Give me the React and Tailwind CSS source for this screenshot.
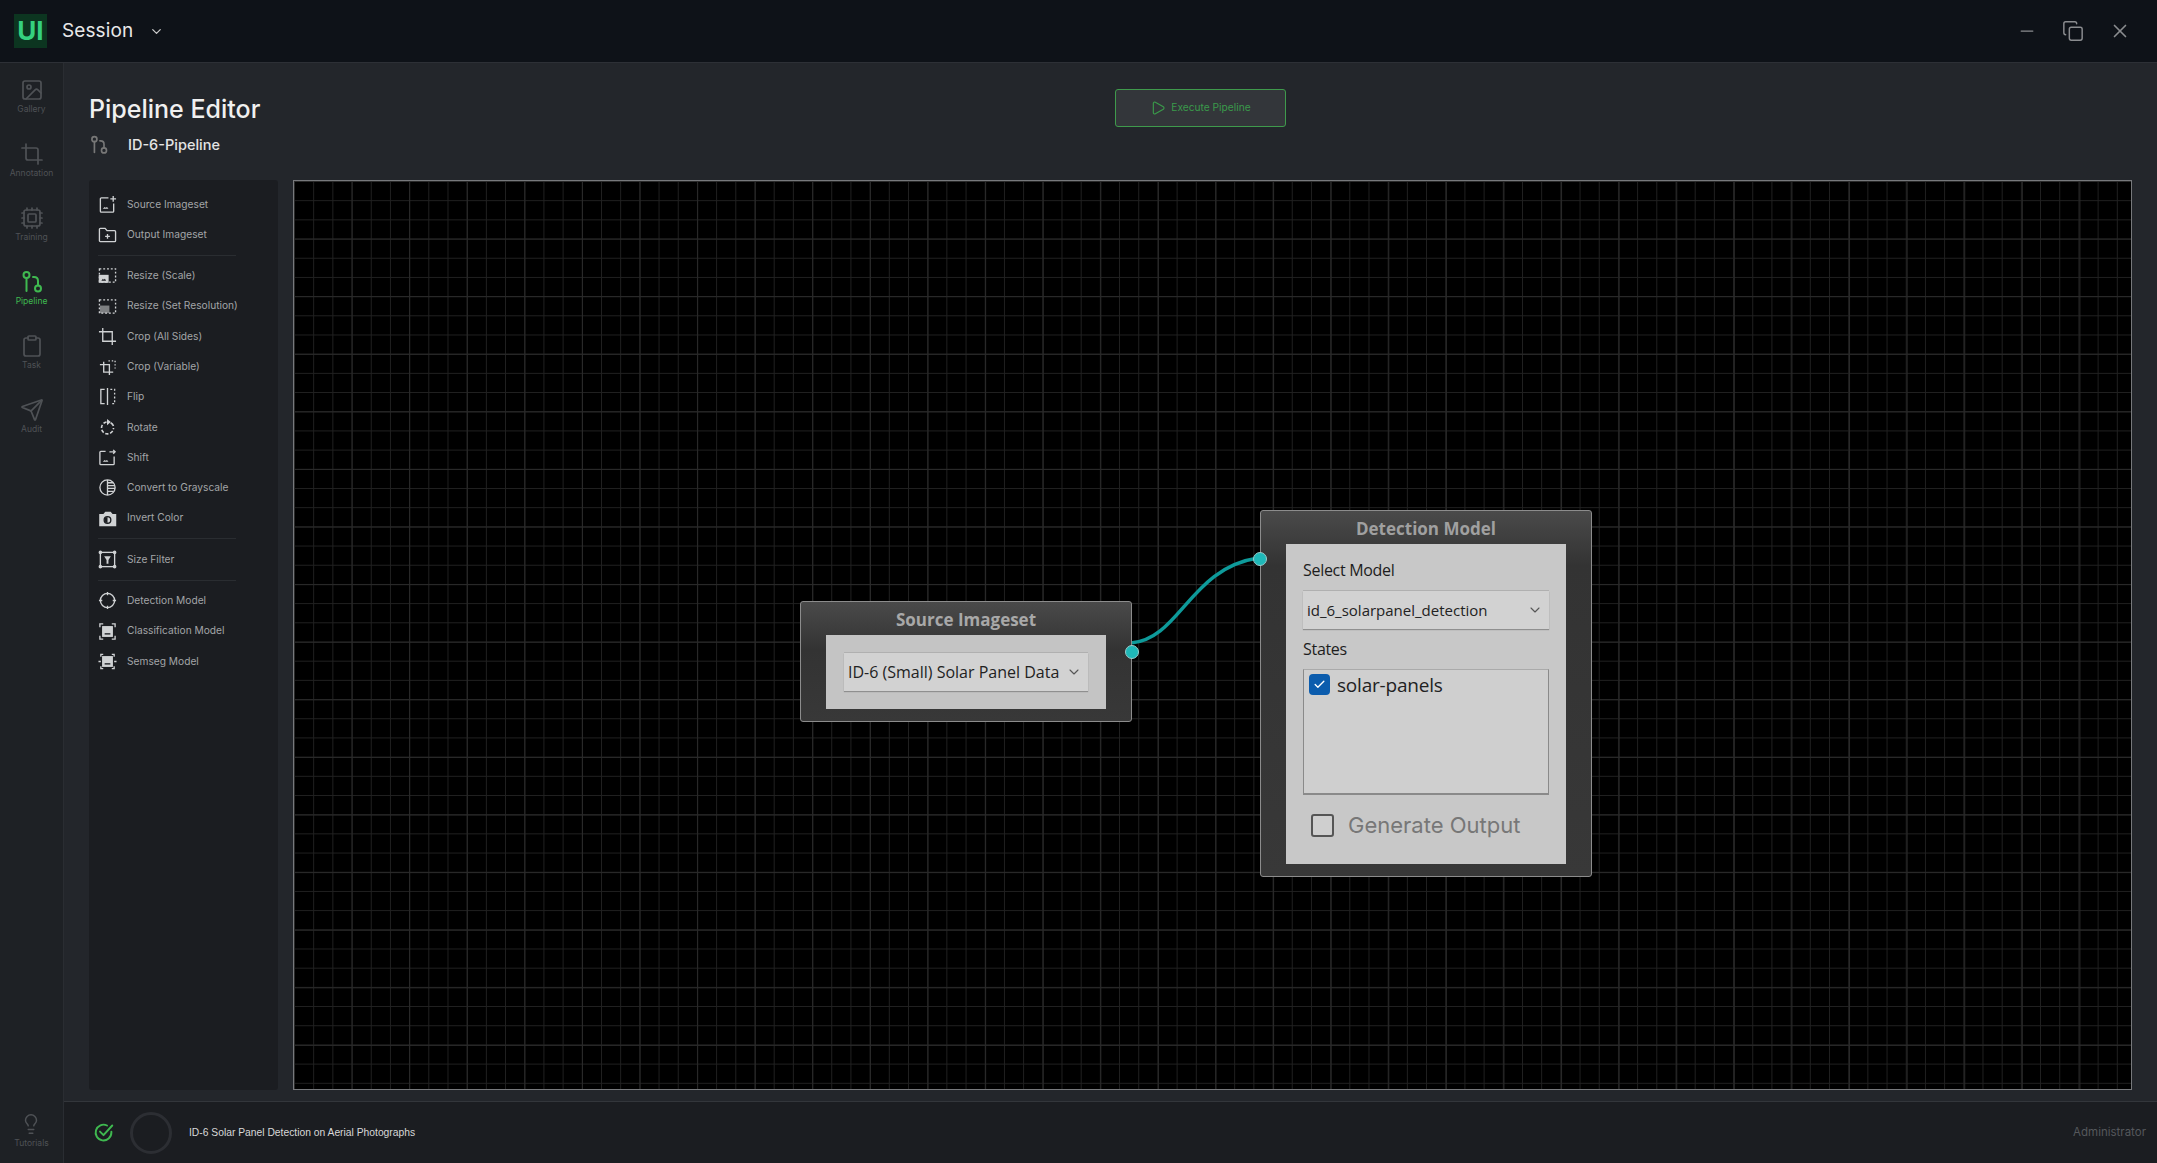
import React from "react";
import { Image, Crop, Cpu, Clipboard, Send, Lightbulb, Minus, Copy, X, ChevronDown, Play, Check } from "lucide-react";

const font = { fontFamily: "Inter, 'Liberation Sans', sans-serif" };

function PipeIcon({ className }) {
  return (
    <svg viewBox="0 0 24 24" fill="none" stroke="currentColor" strokeWidth="2" strokeLinecap="round" className={className}>
      <circle cx="6.5" cy="5" r="3" />
      <path d="M6.5 8v13" />
      <circle cx="18" cy="18.5" r="3" />
      <path d="M18 15.5V11c0-2.5-1.5-4-4-4h-1" />
    </svg>
  );
}

function Ico({ children }) {
  return (
    <svg viewBox="0 0 20 20" fill="none" stroke="currentColor" strokeWidth="1.4" className="w-[19px] h-[19px]">
      {children}
    </svg>
  );
}

const mini = <path d="M5 14.5h6l-1.5-2-1.5 1-1-1z" fill="currentColor" stroke="none" />;
const menuIcons = {
  source: <Ico><path d="M11 3H3.5a1 1 0 0 0-1 1v13a1 1 0 0 0 1 1h12a1 1 0 0 0 1-1V9" />{mini}<path d="M16 1v6M13 4h6" /></Ico>,
  output: <Ico><path d="M1.5 4.5a1 1 0 0 1 1-1h5l2 2.5h8a1 1 0 0 1 1 1v9.5a1 1 0 0 1-1 1h-15a1 1 0 0 1-1-1z" /><path d="M10 9.5v5M7.500 12h5" /></Ico>,
  scale: <Ico><rect x="1.5" y="3" width="17" height="14" strokeDasharray="2 2" /><rect x="1.5" y="10" width="9" height="7" fill="currentColor" /><path d="M3.500 15.500h5l-1.200-2-1.300 1-.8-1z" fill="#1b1d21" stroke="none" /></Ico>,
  res: <Ico><rect x="1.5" y="3" width="17" height="14" strokeDasharray="2 2" /><rect x="2" y="9" width="10" height="8" fill="currentColor" opacity=".55" stroke="none" /></Ico>,
  crop: <Ico><path d="M5 1v14h14M1 5h14v14" /></Ico>,
  cropv: <Ico><path d="M6 5v11h10M2 8h10v11" /><path d="M11 4h7v8" strokeDasharray="1.5 2" /></Ico>,
  flip: <Ico><path d="M7 2.5H3v15h4M10 1v18" /><path d="M13 2.5h4.5v15H13" strokeDasharray="2 2" /></Ico>,
  rotate: <Ico><path d="M9 4.200a6.300 6.300 0 1 0 7.300 6.300" strokeDasharray="3.500 1.800" strokeWidth="1.700" /><path d="M16.300 8.500a6.300 6.300 0 0 0-3-3.500" strokeWidth="1.700" /><path d="M9.500 1v6.500l4-3.250z" fill="currentColor" stroke="none" /></Ico>,
  shift: <Ico><path d="M8 3.5H3a1 1 0 0 0-1 1v12a1 1 0 0 0 1 1h13a1 1 0 0 0 1-1V9" />{mini}<path d="M12 4h6M16 2l2 2-2 2" /></Ico>,
  gray: <Ico><circle cx="10" cy="10" r="8" /><path d="M10 2v16M10 5h6M10 8h8M10 11h8M10 14h6" /></Ico>,
  invert: <Ico><path d="M2 6h4l2-2.5h5L15 6h3.5v11.5H2z" fill="currentColor" /><circle cx="10" cy="11.5" r="3.5" stroke="#1b1d21" /><path d="M10 8.5a3 3 0 0 0 0 6z" fill="#1b1d21" stroke="none" /></Ico>,
  size: <Ico><rect x="2.5" y="2.5" width="15" height="15" /><path d="M6.5 6.5h7L11 10.5v4H9v-4z" fill="currentColor" stroke="none" /><circle cx="2.5" cy="2.5" r="1.2" /><circle cx="17.5" cy="2.5" r="1.2" /><circle cx="2.5" cy="17.5" r="1.2" /><circle cx="17.5" cy="17.5" r="1.2" /></Ico>,
  det: <Ico><circle cx="10" cy="10" r="7.5" /><path d="M10 1v3.5M10 15.5V19M1 10h3.5M15.5 10H19" /></Ico>,
  cls: <Ico><path d="M2 5.5V2h3.5M14.5 2H18v3.5M18 14.5V18h-3.5M5.5 18H2v-3.5" /><rect x="5" y="5" width="10" height="10" fill="currentColor" /><path d="M7 12.5h6" stroke="#1b1d21" /></Ico>,
  sem: <Ico><path d="M3 5V2.5h2.5M14.500 2.500H17V5M17 15v2.500h-2.500M5.500 17.500H3V15M0.500 10H3M17 10h2.500" /><rect x="5" y="5" width="10" height="10" fill="currentColor" /><path d="M7 12.500h6" stroke="#1b1d21" /></Ico>,
};

const navItems = [
  ["Gallery", Image],
  ["Annotation", Crop],
  ["Training", Cpu],
  ["Pipeline", PipeIcon],
  ["Task", Clipboard],
  ["Audit", Send],
];

const groups = [
  [["Source Imageset", "source"], ["Output Imageset", "output"]],
  [["Resize (Scale)", "scale"], ["Resize (Set Resolution)", "res"], ["Crop (All Sides)", "crop"], ["Crop (Variable)", "cropv"], ["Flip", "flip"], ["Rotate", "rotate"], ["Shift", "shift"], ["Convert to Grayscale", "gray"], ["Invert Color", "invert"]],
  [["Size Filter", "size"]],
  [["Detection Model", "det"], ["Classification Model", "cls"], ["Semseg Model", "sem"]],
];

function NodeSelect({ children, className }) {
  return (
    <div className={"flex items-center justify-between h-[38px] bg-[#d2d2d2] shadow-[0_1px_1px_#8f8f8f,0_-1px_0_#b0b0b0] pl-[4px] pr-[6px] text-[#222] " + className}>
      <span className="whitespace-nowrap" style={{ fontFamily: "'Open Sans', sans-serif" }}>{children}</span>
      <ChevronDown className="w-[16px] h-[16px] text-[#555]" strokeWidth={1.6} />
    </div>
  );
}

export default function App() {
  return (
    <div className="w-full h-screen overflow-hidden flex flex-col bg-[#23262b]" style={font}>
      <header className="h-[63px] shrink-0 flex items-center bg-[#0e1218] border-b border-[#2d3036]">
        <div className="ml-[14px] w-[33px] h-[34px] flex items-center justify-center bg-[#0c3520] text-[#35d07f] text-[26px] font-bold leading-none">UI</div>
        <span className="ml-[15px] pt-[1px] text-[19px] text-[#e8e8e8] tracking-[0.1px]">Session</span>
        <ChevronDown className="ml-[16px] w-[15px] h-[15px] text-[#ccc]" />
        <div className="ml-auto mr-[26px] flex items-center gap-[25px] text-[#8a8c8f]">
          <Minus className="w-[20px] h-[20px]" strokeWidth={1.5} />
          <Copy className="w-[22px] h-[22px]" strokeWidth={1.6} />
          <X className="w-[22px] h-[22px]" strokeWidth={1.8} />
        </div>
      </header>

      <div className="flex-1 flex min-h-0">
        <aside className="w-[64px] shrink-0 flex flex-col items-center bg-[#1e2125] border-r border-[#2a2d32]">
          <nav className="flex flex-col items-center pt-[15px] gap-[22px] w-full">
            {navItems.map(([label, Icon]) => {
              const active = label === "Pipeline";
              return (
                <div key={label} className={"flex flex-col items-center h-[42px] w-full " + (active ? "text-[#3fb950]" : "text-[#4f5256]")}>
                  <Icon className="w-[24px] h-[24px]" strokeWidth={1.7} />
                  <span className="mt-[1px] text-[8.5px] leading-[12px] whitespace-nowrap">{label}</span>
                </div>
              );
            })}
          </nav>
          <div className="mt-auto mb-[14px] flex flex-col items-center text-[#4f5256]">
            <Lightbulb className="w-[22px] h-[22px]" strokeWidth={1.6} />
            <span className="mt-[2px] text-[8.5px] leading-[12px]">Tutorials</span>
          </div>
        </aside>

        <div className="flex-1 min-w-0 flex flex-col">
          <div className="flex-1 min-h-0 flex flex-col px-[25px] pb-[11px]">
            <div className="h-[117px] shrink-0 flex items-start">
              <div className="w-[1026px] shrink-0 pt-[31px]">
                <h1 className="text-[25px] leading-[30px] font-medium text-[#f0f0f0]">Pipeline Editor</h1>
                <div className="mt-[11px] flex items-center">
                  <PipeIcon className="w-[20px] h-[20px] text-[#777]" />
                  <span className="ml-[19px] text-[14.500px] leading-[20px] font-medium text-[#e4e4e4]">ID-6-Pipeline</span>
                </div>
              </div>
              <button className="mt-[26px] w-[171px] h-[38px] flex items-center justify-center gap-[5px] rounded-[3px] border border-[#3f9a4c] bg-[#33363a] text-[#3a9a4a] text-[10.200px]">
                <Play className="w-[16px] h-[16px]" strokeWidth={1.7} />
                Execute Pipeline
              </button>
            </div>

            <div className="flex-1 min-h-0 flex gap-[15px]">
              <div className="w-[189px] shrink-0 bg-[#1b1d21] rounded-[3px] pt-[9px] pl-[9px]">
                {groups.map((g, i) => (
                  <div key={i} className={i ? "mt-[5px] pt-[5px] border-t border-[#2a2d31] w-[138px]" : "w-[138px]"}>
                    {g.map(([label, key]) => (
                      <div key={label} className="h-[30.300px] flex items-center text-[#a3a5a8] text-[10.200px] whitespace-nowrap">
                        <span className="w-[19px] h-[19px] shrink-0 text-[#d0d2d4]">{menuIcons[key]}</span>
                        <span className="ml-[10px]">{label}</span>
                      </div>
                    ))}
                  </div>
                ))}
              </div>

              <div className="relative flex-1 min-w-0 bg-black border border-[#77797c] overflow-hidden bg-[linear-gradient(#2a2a2a_1px,transparent_1px),linear-gradient(90deg,#2a2a2a_1px,transparent_1px),linear-gradient(#212121_1px,transparent_1px),linear-gradient(90deg,#212121_1px,transparent_1px)] bg-[size:57.600px_57.600px,57.600px_57.600px,19.200px_19.200px,19.200px_19.200px]">
                <svg className="absolute left-[836px] top-[372px] w-[130px] h-[100px]" viewBox="0 0 130 100" fill="none">
                  <path d="M1 90C50 86 60 15 128 5" stroke="#0e9a9a" strokeWidth="3.5" />
                </svg>

                <div className="absolute left-[506px] top-[420px] w-[332px] h-[121px] bg-[linear-gradient(#4a4a4a,#333_40%,#383838)] border border-[#8c8c8c] rounded-[3px] flex flex-col items-center">
                  <div className="h-[33px] pt-[3px] flex items-center text-[17px] font-bold text-[#a8a8a8]" style={{ fontFamily: "'Open Sans', sans-serif" }}>Source Imageset</div>
                  <div className="w-[280px] h-[74px] bg-[#c4c4c4] px-[18px] pt-[18px]">
                    <NodeSelect className="text-[16px]">ID-6 (Small) Solar Panel Data</NodeSelect>
                  </div>
                  <span className="absolute -right-[8px] top-[43px] w-[14px] h-[14px] rounded-full bg-[#1fb8b8] border border-[#9cc]"></span>
                </div>

                <div className="absolute left-[966px] top-[329px] w-[332px] h-[367px] bg-[linear-gradient(#4a4a4a,#333_15%,#383838)] border border-[#8c8c8c] rounded-[3px] flex flex-col items-center">
                  <div className="h-[33px] pt-[3px] flex items-center text-[17px] font-bold text-[#a0a0a0]" style={{ fontFamily: "'Open Sans', sans-serif" }}>Detection Model</div>
                  <div className="w-[280px] h-[320px] bg-[#c8c8c8] px-[17px] text-[#1d1d1d]" style={{ fontFamily: "'Open Sans', sans-serif" }}>
                    <div className="pt-[14px] text-[16px] leading-[24px] tracking-[-0.3px]">Select Model</div>
                    <NodeSelect className="mt-[9px] text-[15px]">id_6_solarpanel_detection</NodeSelect>
                    <div className="mt-[8px] text-[16px] leading-[24px] tracking-[-0.3px]">States</div>
                    <div className="mt-[8px] h-[126px] bg-[#cfcfcf] border-x border-b-2 border-t border-x-[#8a8a8a] border-b-[#8a8a8a] border-t-[#aaaaaa] pl-[5px] pt-[3px] flex items-start">
                      <span className="w-[21px] h-[21px] rounded-[4px] bg-[#0b5cad] flex items-center justify-center mt-[1px]">
                        <Check className="w-[13px] h-[13px] text-white" strokeWidth={2.5} />
                      </span>
                      <span className="ml-[7px] text-[19px] leading-[24px] tracking-[-0.2px] text-[#222]">solar-panels</span>
                    </div>
                    <div className="mt-[18px] pl-[8px] flex items-center" style={font}>
                      <span className="w-[23px] h-[23px] rounded-[3px] border-2 border-[#555] bg-[#cfcfcf]"></span>
                      <span className="ml-[14px] text-[22px] leading-[24px] text-[#777]">Generate Output</span>
                    </div>
                  </div>
                  <span className="absolute -left-[8px] top-[41px] w-[14px] h-[14px] rounded-full bg-[#1fb8b8] border border-[#9cc]"></span>
                </div>
              </div>
            </div>
          </div>

          <footer className="h-[62px] shrink-0 flex items-center bg-[#1b1d21] border-t border-[#33363b] text-[10.300px]">
            <svg viewBox="0 0 24 24" fill="none" stroke="#3fb950" strokeWidth="2.2" strokeLinecap="round" strokeLinejoin="round" className="ml-[29px] w-[21px] h-[21px]">
              <path d="M21 11v1a9 9 0 1 1-5-8" />
              <path d="M8 11l4 4 10-11" />
            </svg>
            <span className="ml-[16px] w-[42px] h-[42px] rounded-full border-[3px] border-[#2c2e33]"></span>
            <span className="ml-[17px] font-medium text-[#d8d8d8]" style={{ fontFamily: "'Liberation Sans', sans-serif" }}>ID-6 Solar Panel Detection on Aerial Photographs</span>
            <span className="ml-auto mr-[11px] text-[#55585c] text-[11.500px]">Administrator</span>
          </footer>
        </div>
      </div>
    </div>
  );
}
